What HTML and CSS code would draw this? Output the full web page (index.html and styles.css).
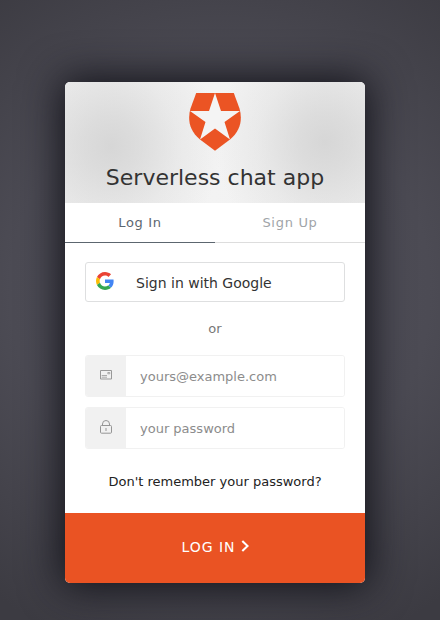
FILE: index.html
```
<!DOCTYPE html>
<html lang="en">
<head>
<meta charset="utf-8">
<title>Serverless chat app</title>
<link rel="stylesheet" href="styles.css">
</head>
<body>
<main class="card">
  <header class="header">
    <svg class="logo" viewBox="0 0 52 58" width="52" height="58" aria-hidden="true">
      <path fill="#eb5424" d="M7.2 0H44.8L50.5 15.5C53.5 26 52 37 41 46.5L26 57.7L11 46.5C0 37 -1.5 26 1.5 15.5Z"/>
      <path class="star" d="M26 0L32 18H51L35.5 29L41 46.5L26 35.5L11 46.5L16.5 29L1 18H20Z"/>
    </svg>
    <h1 class="title">Serverless chat app</h1>
  </header>
  <nav class="tabs">
    <span class="tab tab-active">Log In</span>
    <span class="tab">Sign Up</span>
  </nav>
  <form class="form">
    <button class="google" type="button">
      <svg class="google-icon" width="18" height="18" viewBox="0 0 48 48" aria-hidden="true">
        <path fill="#ea4335" d="M24 9.5c3.54 0 6.71 1.22 9.21 3.6l6.85-6.85C35.9 2.38 30.47 0 24 0 14.62 0 6.51 5.38 2.56 13.22l7.98 6.19C12.43 13.72 17.74 9.5 24 9.5z"/>
        <path fill="#4285f4" d="M46.98 24.55c0-1.57-.15-3.09-.38-4.55H24v9.02h12.94c-.58 2.96-2.26 5.48-4.78 7.18l7.73 6c4.51-4.18 7.09-10.36 7.09-17.65z"/>
        <path fill="#fbbc05" d="M10.53 28.59c-.48-1.45-.76-2.99-.76-4.59s.27-3.14.76-4.59l-7.98-6.19C.92 16.46 0 20.12 0 24c0 3.88.92 7.54 2.56 10.78l7.97-6.19z"/>
        <path fill="#34a853" d="M24 48c6.48 0 11.93-2.13 15.89-5.81l-7.73-6c-2.15 1.45-4.92 2.3-8.16 2.3-6.26 0-11.57-4.22-13.47-9.91l-7.98 6.19C6.51 42.62 14.62 48 24 48z"/>
      </svg>
      <span>Sign in with Google</span>
    </button>
    <p class="or">or</p>
    <label class="field">
      <span class="field-icon">
        <svg width="12" height="14" viewBox="0 0 12 14" fill="none" stroke="#999" aria-hidden="true">
          <path d="M.5 2.5h11v8.5H.5z"/>
          <path d="M1.7 7.5H7M1.7 9.2H7M7.8 4.5h2v1.3h-2z" stroke-width=".8"/>
        </svg>
      </span>
      <input class="input" type="email" placeholder="yours@example.com">
    </label>
    <label class="field">
      <span class="field-icon">
        <svg width="12" height="14" viewBox="0 0 12 14" fill="none" stroke="#959595" aria-hidden="true">
          <rect x=".5" y="5.5" width="11" height="7.7" rx="1"/>
          <path d="M2.5 5.5V4a3.5 3.5 0 0 1 7 0V5.5M6 8v3"/>
        </svg>
      </span>
      <input class="input" type="password" placeholder="your password">
    </label>
    <a class="forgot">Don't remember your password?</a>
  </form>
  <button class="submit" type="submit">
    <span>LOG IN</span>
    <svg width="8" height="12" viewBox="0 0 8 12" fill="none" stroke="#fff" stroke-width="2.1" aria-hidden="true"><path d="M1.3.9L6.6 6l-5.3 5.1"/></svg>
  </button>
</main>
</body>
</html>
```
FILE: styles.css
```
* { box-sizing: border-box; }
body {
  margin: 0;
  height: 620px;
  padding-top: 82px;
  overflow: hidden;
  background: radial-gradient(ellipse 420px 420px at 50% 47%, #52515b 0%, #4c4b54 50%, #3c3b42 90%);
  font-family: "DejaVu Sans", sans-serif;
  font-size: 13px;
}
.card {
  width: 300px;
  height: 501px;
  margin-left: 65px;
  display: flex;
  flex-direction: column;
  overflow: hidden;
  border-radius: 5px;
  background: #fff;
  box-shadow: 0 0 40px 4px #111118;
}
.header {
  height: 121px;
  padding-top: 11px;
  display: flex;
  flex-direction: column;
  align-items: center;
  background:
    radial-gradient(ellipse 110px 115px at 46px 64px, rgba(208, 208, 208, .8), rgba(210, 210, 210, .65) 25%, rgba(215, 215, 215, .3) 62%, rgba(225, 225, 225, 0)),
    radial-gradient(ellipse 110px 115px at 260px 60px, rgba(208, 208, 208, .8), rgba(210, 210, 210, .65) 25%, rgba(215, 215, 215, .3) 62%, rgba(225, 225, 225, 0)),
    linear-gradient(90deg, #eee, #f3f3f3 50%, #eee);
}
.logo { display: block; }
.star { fill: #f4f4f4; }
.title {
  margin: 14px 0 0;
  font-size: 22px;
  font-weight: 400;
  line-height: 26px;
  color: #333;
}
.tabs {
  display: flex;
  height: 40px;
}
.tab {
  flex: 1;
  border-bottom: 1px solid #ddd;
  line-height: 40px;
  text-align: center;
  letter-spacing: .7px;
  color: #a0a4a8;
}
.tab-active {
  border-color: #5c666f;
  color: #5c666f;
}
.form {
  height: 270px;
  padding: 19px 20px 0;
  display: flex;
  flex-direction: column;
}
.google {
  height: 40px;
  padding: 0 10px;
  display: flex;
  align-items: center;
  border: 1px solid #dedfe0;
  border-radius: 3px;
  background: #fff;
  font: 14px "DejaVu Sans", sans-serif;
  color: #333;
}
.google span { padding-top: 2px; }
.google-icon { margin: 0 22px 2px 0; }
.or {
  margin: 17px 0;
  line-height: 19px;
  text-align: center;
  color: #777;
}
.field {
  display: flex;
  height: 42px;
  margin-bottom: 10px;
  border: 1px solid #f1f1f1;
  border-radius: 3px;
  overflow: hidden;
}
.field-icon {
  width: 40px;
  display: flex;
  align-items: center;
  justify-content: center;
  padding-bottom: 2px;
  background: #f1f1f1;
}
.input {
  flex: 1;
  min-width: 0;
  padding: 0 14px;
  border: 0;
  outline: 0;
  font: 13px "DejaVu Sans", sans-serif;
}
.input::placeholder { color: #8c8c8c; opacity: 1; }
.forgot {
  margin-top: 13px;
  line-height: 20px;
  text-align: center;
  color: #222;
}
.submit {
  height: 70px;
  padding: 0 0 2px;
  display: flex;
  align-items: center;
  justify-content: center;
  gap: 5px;
  border: 0;
  background: #ea5323;
  font: 14px "DejaVu Sans", sans-serif;
  letter-spacing: 1px;
  color: #fff;
}
.submit svg { margin-bottom: 2px; }
```
